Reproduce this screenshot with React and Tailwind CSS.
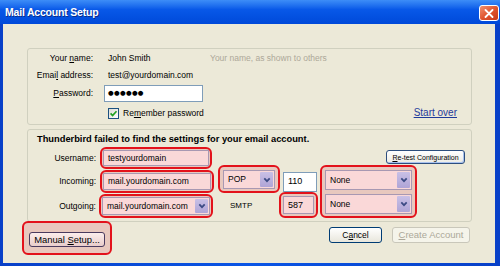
import React from 'react';

const U = ({ children }) => (
  <span className="underline underline-offset-[1px] decoration-[0.5px]">{children}</span>
);

const RedBox = ({ className = '', children }) => (
  <div className={`border-2 border-[#E3121B] rounded-[6px] bg-[#E8C8BE] ${className}`}>
    {children}
  </div>
);

const Arrow = () => (
  <div className="w-[13px] self-stretch my-[1px] mr-[1px] rounded-[1px] bg-gradient-to-b from-[#C9C0E6] to-[#AFA4D6] flex items-center justify-center">
    <svg width="8" height="6" viewBox="0 0 8 6">
      <path d="M1.3 1.3 L4 4.2 L6.7 1.3" fill="none" stroke="#3B4A84" strokeWidth="1.7" />
    </svg>
  </div>
);

const PinkField = ({ children, select, className = '' }) => (
  <div className={`flex items-center border border-[#A898B2] bg-[#FAD8D8] ${className}`}>
    <span className="flex-1 pl-[4px] text-[8.5px] leading-none">{children}</span>
    {select && <Arrow />}
  </div>
);

const Label = ({ children, className = '' }) => (
  <div className={`flex items-center justify-end pr-[4px] text-[8.5px] leading-none ${className}`}>
    <span>{children}</span>
  </div>
);

const App = () => {
  return (
    <div className="w-[500px] h-[266px] flex flex-col bg-gradient-to-r from-[#0840C8] via-[#0A55E6] to-[#0840C8] font-['Liberation_Sans',Arial,sans-serif] text-black overflow-hidden">
      <div className="h-[24px] shrink-0 flex items-center pl-[5px] pr-[1px] bg-gradient-to-b from-[#3D8DF7] via-[#0858E8] via-40% to-[#0049D9]">
        <span className="flex-1 text-white font-bold text-[10.5px] leading-none tracking-[-0.2px] [text-shadow:1px_1px_0_#0B2E8C]">
          Mail Account Setup
        </span>
        <div className="w-[20px] h-[16px] mt-[2px] rounded-[3px] border border-white bg-gradient-to-br from-[#F0906E] via-[#E0552F] to-[#C7391A] flex items-center justify-center">
          <svg width="10" height="9" viewBox="0 0 10 9">
            <path d="M1.5 1 L8.5 8 M8.5 1 L1.5 8" stroke="white" strokeWidth="1.8" strokeLinecap="round" />
          </svg>
        </div>
      </div>

      <div className="flex-1 ml-[3px] mr-[5px] mb-[3px] bg-[#ECE9D8] pt-[24px] pl-[24px] pr-[23px] flex flex-col">
        {/* account details */}
        <div className="h-[77px] border border-[#D0D0BF] rounded-[3px] flex flex-col">
          <div className="h-[18px] flex items-center">
            <Label className="w-[69px] pr-0">
              Your <U>n</U>ame:
            </Label>
            <span className="w-[113px] pl-[11px] text-[8.5px] leading-none">John Smith</span>
            <span className="text-[8.5px] leading-none text-[#ACA899]">Your name, as shown to others</span>
          </div>
          <div className="h-[17px] flex items-center">
            <Label className="w-[69px] pr-0">
              Emai<U>l</U> address:
            </Label>
            <span className="pl-[11px] text-[8.5px] leading-none">test@yourdomain.com</span>
          </div>
          <div className="h-[19px] flex items-center">
            <Label className="w-[69px] pr-0">
              <U>P</U>assword:
            </Label>
            <div className="ml-[7px] w-[99px] h-[17px] border border-[#7F9DB9] bg-white flex items-center pl-[3px] font-['DejaVu_Sans',sans-serif] text-[6.5px] leading-none tracking-[0.3px]">
              ●●●●●●
            </div>
          </div>
          <div className="h-[20px] flex items-center">
            <div className="ml-[80px] w-[11px] h-[11px] border border-[#1C5180] bg-gradient-to-br from-[#DCDCD7] to-white flex items-center justify-center">
              <svg width="9" height="9" viewBox="0 0 9 9">
                <path d="M1.6 4.4 L3.6 6.5 L7.5 2.2" fill="none" stroke="#21A121" strokeWidth="1.7" />
              </svg>
            </div>
            <span className="ml-[4px] text-[8.5px] leading-none">
              Re<U>m</U>ember password
            </span>
            <span className="ml-auto mr-[14px] text-[10px] leading-none text-[#1F3A9B] underline underline-offset-[1px]">
              Start over
            </span>
          </div>
        </div>

        {/* server settings */}
        <div className="mt-[4px] h-[93px] border border-[#D0D0BF] rounded-[3px] flex flex-col">
          <div className="pt-[3px] pl-[9px] h-[17px] flex items-center">
            <span className="font-bold text-[9.3px] leading-none">
              Thunderbird failed to find the settings for your email account.
            </span>
          </div>
          <div className="grid grid-cols-[72px_118px_62px_39px_99px_1fr] grid-rows-[22px_25px_24px]">
            <Label className="col-start-1 row-start-1">Username:</Label>
            <RedBox className="col-start-2 row-start-1 self-center w-[112px] p-[1px]">
              <PinkField className="h-[16px]">testyourdomain</PinkField>
            </RedBox>
            <button className="col-start-5 col-span-2 row-start-1 justify-self-end self-start mt-[3px] mr-[6px] w-[79px] h-[14px] rounded-[3px] border border-[#2D4E7E] bg-gradient-to-b from-white to-[#ECEBE4] shadow-[inset_-1px_-1px_0_#A9C2EE] text-[7px] leading-none">
              <U>R</U>e-test Configuration
            </button>

            <Label className="col-start-1 row-start-2">Incoming:</Label>
            <RedBox className="col-start-2 row-start-2 self-center w-[114px] p-[1px]">
              <PinkField className="h-[17px]">mail.yourdomain.com</PinkField>
            </RedBox>
            <RedBox className="col-start-3 row-start-2 self-end mb-[1px] h-[28px] w-[62px] pt-[3px] px-[3px] pb-[2px] flex">
              <PinkField select className="flex-1">POP</PinkField>
            </RedBox>
            <div className="col-start-4 row-start-2 self-center ml-[3px] w-[34px] h-[20px] border border-[#7F9DB9] bg-white flex items-center pl-[4px] text-[9px] leading-none">
              110
            </div>
            <RedBox className="col-start-5 row-start-2 row-span-2 -mt-[4px] ml-[1px] w-[97px] pt-[3px] px-[3px] pb-[2px] flex flex-col gap-[4px]">
              <PinkField select className="h-[20px]">None</PinkField>
              <PinkField select className="h-[20px]">None</PinkField>
            </RedBox>

            <Label className="col-start-1 row-start-3">Outgoing:</Label>
            <RedBox className="col-start-2 row-start-3 self-center -ml-[1px] w-[114px] p-[1px]">
              <PinkField select className="h-[18px]">mail.yourdomain.com</PinkField>
            </RedBox>
            <div className="col-start-3 row-start-3 flex items-center pl-[12px] text-[8px] leading-none">SMTP</div>
            <RedBox className="col-start-4 row-start-3 -mt-[2px] -ml-[1px] w-[39px] p-[2px] flex">
              <div className="flex-1 border border-[#A898B2] bg-[#FAD8D8] flex items-center pl-[4px] text-[9px] leading-none">
                587
              </div>
            </RedBox>
          </div>
        </div>

        {/* buttons */}
        <div className="-mt-[1px] flex items-start">
          <RedBox className="-ml-[5px] px-[5px] py-[3px]">
            <button className="w-[76px] h-[15px] rounded-[3px] border border-[#4A3A5E] bg-gradient-to-b from-[#FCEDEC] to-[#E9CDCB] text-[9.4px] leading-none">
              Manual <U>S</U>etup...
            </button>
          </RedBox>
          <button className="ml-auto mt-[6px] w-[53px] h-[16px] rounded-[3px] border border-[#003C74] bg-gradient-to-b from-white to-[#E8E6DC] text-[8.5px] leading-none">
            C<U>a</U>ncel
          </button>
          <button className="ml-[10px] mr-[2px] mt-[6px] w-[78px] h-[16px] rounded-[3px] border border-[#C9C7BA] bg-[#F5F4EA] text-[9.5px] leading-none text-[#ACA899]">
            <U>C</U>reate Account
          </button>
        </div>
      </div>
    </div>
  );
};

export default App;
